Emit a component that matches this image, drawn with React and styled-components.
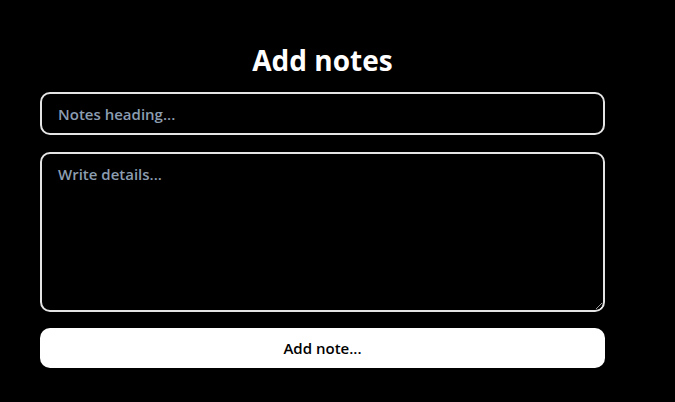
import React from 'react';
import styled, { createGlobalStyle } from 'styled-components';

const GlobalStyle = createGlobalStyle`
  html, body {
    margin: 0;
    background: #000000;
  }
  body {
    font-family: "Open Sans", "Noto Sans", sans-serif;
    color: #ffffff;
  }
`;

const Page = styled.div`
  min-height: 402px;
  background: #000000;
  padding: 40px 70px 0 40px;
  box-sizing: border-box;
`;

const Form = styled.form`
  width: 565px;
  display: flex;
  flex-direction: column;
`;

const Title = styled.h1`
  margin: 0 0 12px;
  text-align: center;
  font-size: 28px;
  font-weight: 700;
  line-height: 40px;
  color: #ffffff;
`;

const Field = styled.input`
  height: 43px;
  padding: 0 16px;
  border: 2px solid #e4e4e4;
  border-radius: 10px;
  background: #000000;
  color: #ffffff;
  font-family: inherit;
  font-size: 15px;
  font-weight: 600;
  box-sizing: border-box;
  &::placeholder {
    color: #8c9db1;
  }
  &:focus {
    outline: none;
  }
`;

const Details = styled.textarea`
  margin-top: 17px;
  height: 160px;
  padding: 10px 16px;
  border: 2px solid #e4e4e4;
  border-radius: 10px;
  background: #000000;
  color: #ffffff;
  font-family: inherit;
  font-size: 15px;
  font-weight: 600;
  box-sizing: border-box;
  &::placeholder {
    color: #8c9db1;
  }
  &:focus {
    outline: none;
  }
`;

const Button = styled.button`
  margin-top: 16px;
  height: 40px;
  border: none;
  border-radius: 10px;
  background: #ffffff;
  color: #000000;
  font-family: inherit;
  font-size: 15px;
  font-weight: 600;
  cursor: pointer;
`;

export default function App() {
  return (
    <>
      <GlobalStyle />
      <Page>
        <Form onSubmit={(e) => e.preventDefault()}>
          <Title>Add notes</Title>
          <Field type="text" placeholder="Notes heading..." />
          <Details placeholder="Write details..." />
          <Button type="submit">Add note...</Button>
        </Form>
      </Page>
    </>
  );
}
